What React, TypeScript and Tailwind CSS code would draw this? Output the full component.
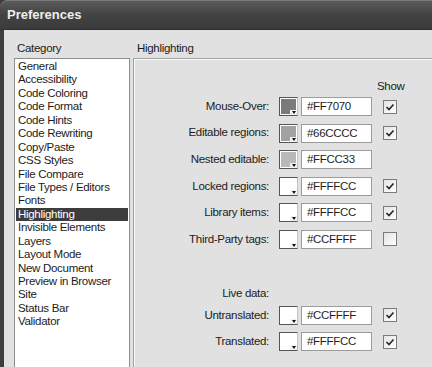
import React from "react";

const categories = [
  "General",
  "Accessibility",
  "Code Coloring",
  "Code Format",
  "Code Hints",
  "Code Rewriting",
  "Copy/Paste",
  "CSS Styles",
  "File Compare",
  "File Types / Editors",
  "Fonts",
  "Highlighting",
  "Invisible Elements",
  "Layers",
  "Layout Mode",
  "New Document",
  "Preview in Browser",
  "Site",
  "Status Bar",
  "Validator",
];

interface HighlightRow {
  label: string;
  fill: string; // full tailwind class
  value: string;
  show?: boolean; // undefined = no checkbox
}

const rows: HighlightRow[] = [
  { label: "Mouse-Over:", fill: "bg-[#7a7a7a]", value: "#FF7070", show: true },
  { label: "Editable regions:", fill: "bg-[#a2a2a2]", value: "#66CCCC", show: true },
  { label: "Nested editable:", fill: "bg-[#b9b9b9]", value: "#FFCC33" },
  { label: "Locked regions:", fill: "bg-white", value: "#FFFFCC", show: true },
  { label: "Library items:", fill: "bg-white", value: "#FFFFCC", show: true },
  { label: "Third-Party tags:", fill: "bg-white", value: "#CCFFFF", show: false },
];

const liveRows: HighlightRow[] = [
  { label: "Untranslated:", fill: "bg-white", value: "#CCFFFF", show: true },
  { label: "Translated:", fill: "bg-white", value: "#FFFFCC", show: true },
];

function Swatch({ fill }: { fill: string }) {
  return (
    <div className="relative w-[19px] h-[19px] shrink-0 border border-[#555] border-r-[#c4c4c4] bg-white p-px">
      <div className={`w-full h-full ${fill}`} />
      {/* dropdown arrow */}
      <div className="absolute right-0 bottom-0 w-[7px] h-[5px] bg-[#f2f2f2] flex items-center justify-center">
        <div className="w-0 h-0 border-l-[2.5px] border-r-[2.5px] border-t-[3px] border-l-transparent border-r-transparent border-t-[#111]" />
      </div>
    </div>
  );
}

function Checkbox({ checked }: { checked: boolean }) {
  return (
    <div className="w-[14px] h-[14px] shrink-0 border border-[#7b7b7b] bg-gradient-to-br from-[#e4e4e4] to-white flex items-center justify-center">
      {checked && (
        <svg width="10" height="10" viewBox="0 0 10 10">
          <path d="M1.5 5 L4 7.5 L8.5 2.5" fill="none" stroke="#2a2a2a" strokeWidth="1.7" />
        </svg>
      )}
    </div>
  );
}

function Row({ row }: { row: HighlightRow }) {
  return (
    <div className="flex items-center h-[19px]">
      <div className="w-[136px] text-right pr-px">{row.label}</div>
      <div className="ml-[9px]">
        <Swatch fill={row.fill} />
      </div>
      <div className="ml-[3px] w-[71px] h-[19px] border border-[#9c9c9c] bg-white pl-[5px] leading-[17px] text-[#1e1e1e]">
        {row.value}
      </div>
      {row.show !== undefined && (
        <div className="ml-[11px]">
          <Checkbox checked={row.show} />
        </div>
      )}
    </div>
  );
}

export default function App() {
  return (
    <div className="w-[432px] h-[367px] overflow-hidden bg-[#3a3a3a] font-['Liberation_Sans',Arial,sans-serif] text-[11.5px] tracking-[-0.3px] text-[#1c1c1c]">
      {/* Title bar */}
      <div className="h-[29px] rounded-tl-[7px] border-t border-[#7a7a7a] bg-gradient-to-b from-[#5b5b5b] via-[#424242] to-[#3b3b3b] flex items-center pl-[7px]">
        <span className="text-[13px] font-bold tracking-normal text-[#eeeeee]">Preferences</span>
      </div>
      <div className="h-px bg-[#2e2e2e]" />

      {/* Body */}
      <div className="flex h-[337px] border-l-4 border-[#3e3e3e] bg-[#e1e1e1]">
        {/* Category list */}
        <div className="pl-[10px] pt-[10px]">
          <div className="h-[17px] leading-[17px] pl-[3px]">Category</div>
          <div className="mt-px w-[116px] h-[330px] border border-[#8e8e8e] bg-white p-px">
            {categories.map((c) => (
              <div
                key={c}
                className={`h-[13.45px] leading-[13.45px] pl-[2px] whitespace-nowrap ${
                  c === "Highlighting" ? "bg-[#3d3d3d] text-white" : ""
                }`}
              >
                {c}
              </div>
            ))}
          </div>
        </div>

        {/* Highlighting panel */}
        <div className="ml-[3px] flex-1 pt-[10px]">
          <div className="h-[17px] leading-[17px] pl-[4px]">Highlighting</div>
          <div className="mt-px h-[330px] border-t border-l border-[#a3a3a3] shadow-[inset_1px_1px_0_#f7f7f7] pt-[20px]">
            <div className="h-[14px] leading-[14px] pl-[243px]">Show</div>
            <div className="mt-[4px] flex flex-col gap-[7.6px]">
              {rows.map((r) => (
                <Row key={r.label} row={r} />
              ))}
            </div>
            <div className="mt-[37px] h-[14px] leading-[14px] w-[136px] text-right pr-px">Live data:</div>
            <div className="mt-[5.7px] flex flex-col gap-[7.6px]">
              {liveRows.map((r) => (
                <Row key={r.label} row={r} />
              ))}
            </div>
          </div>
        </div>
      </div>
    </div>
  );
}
